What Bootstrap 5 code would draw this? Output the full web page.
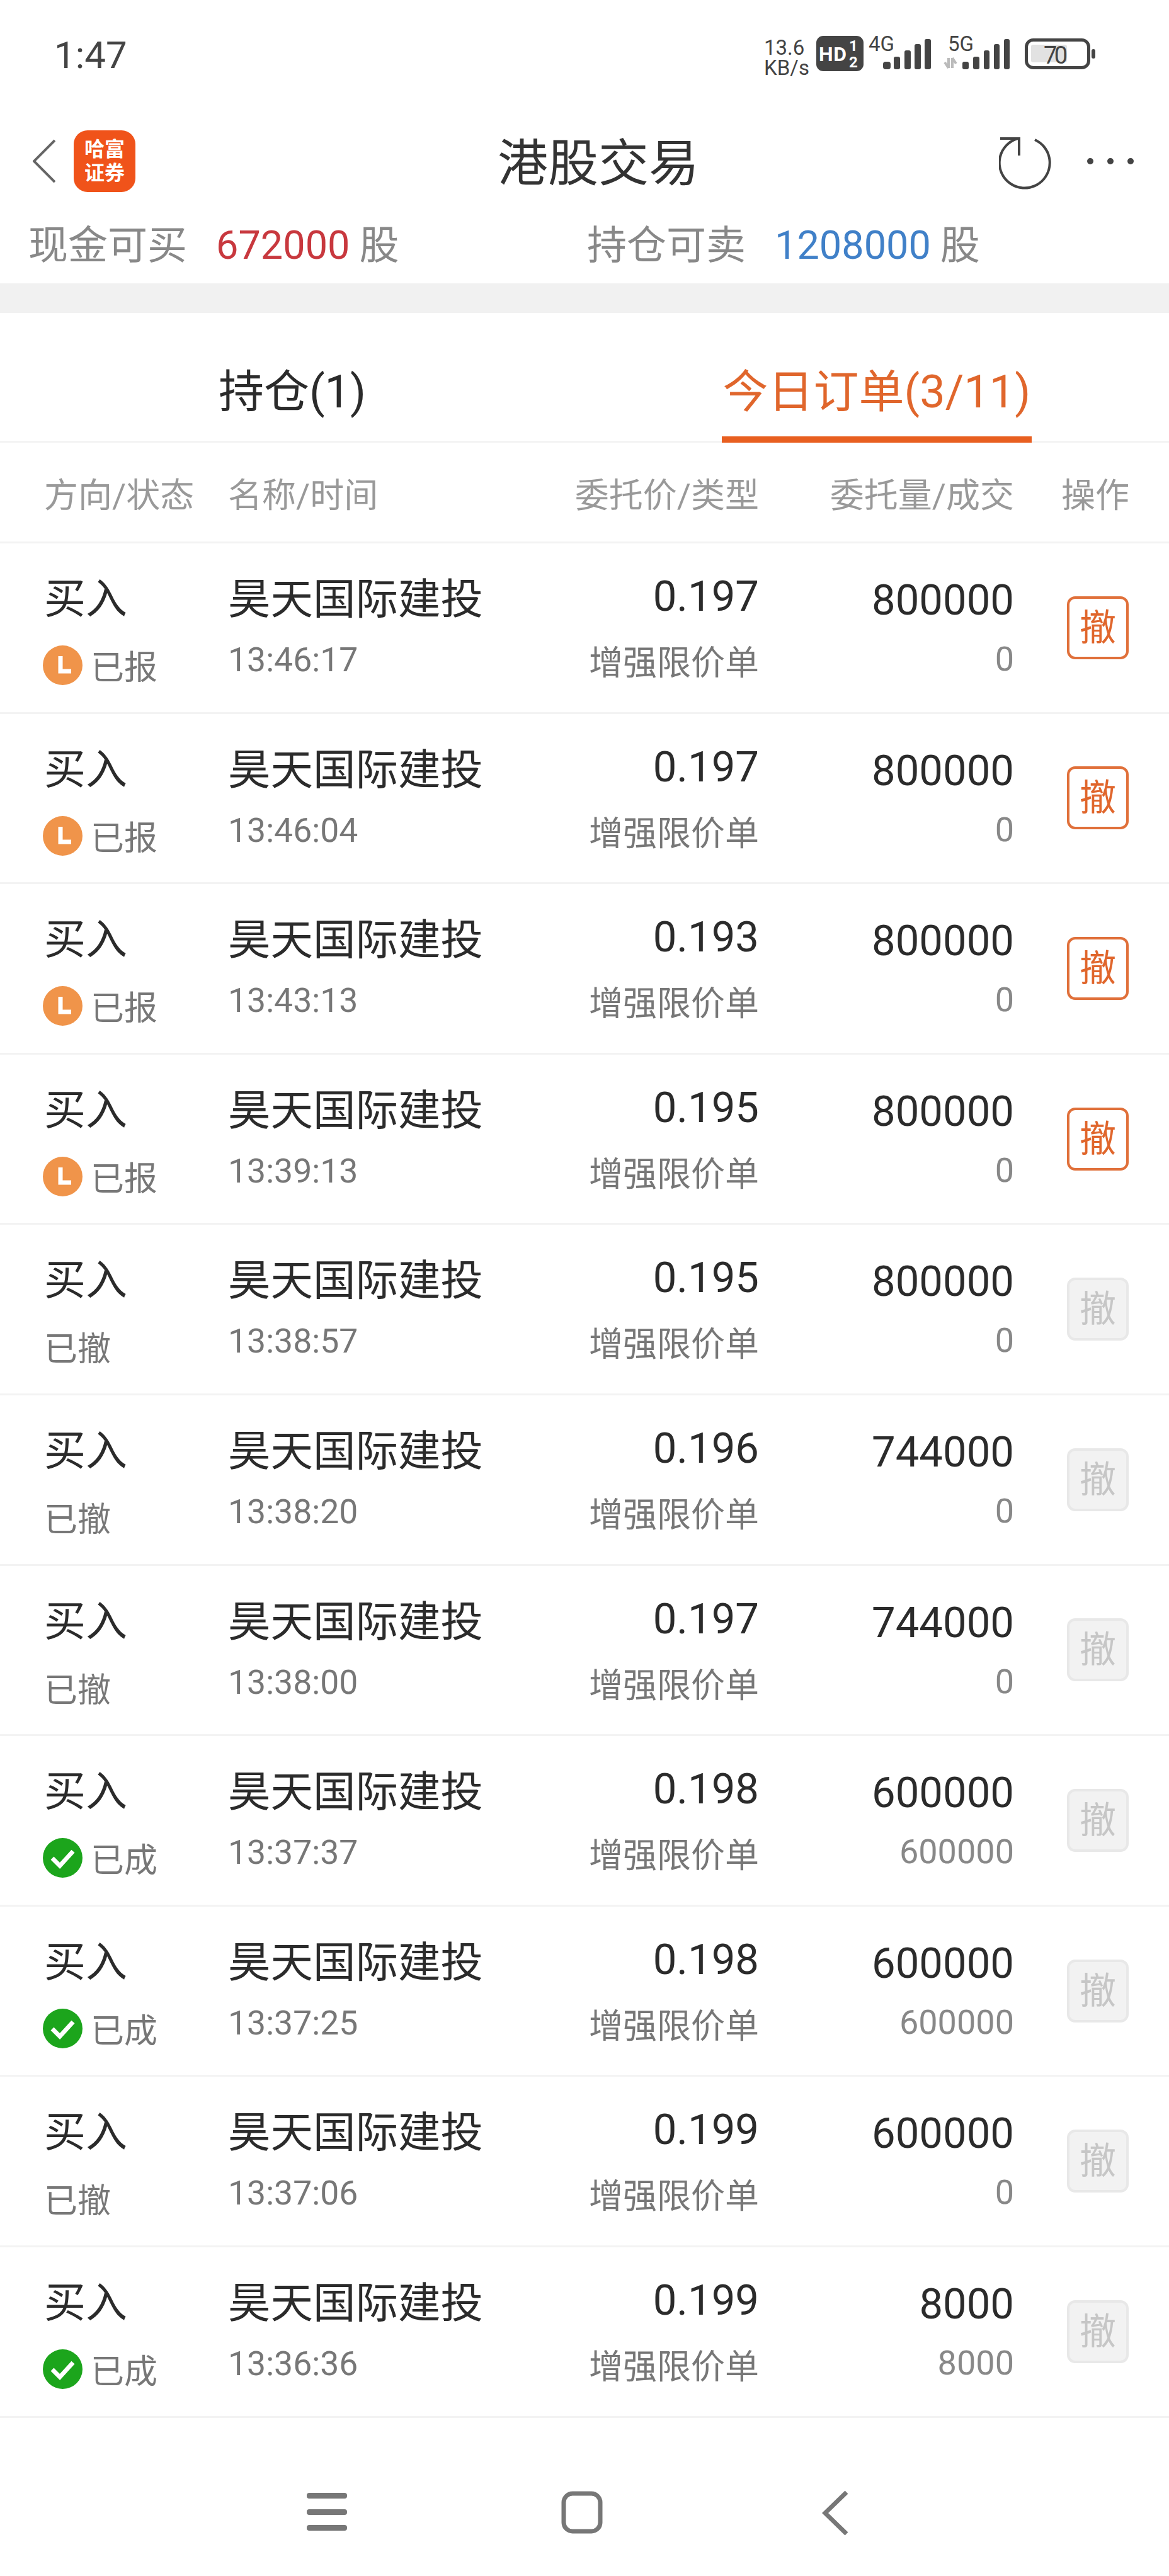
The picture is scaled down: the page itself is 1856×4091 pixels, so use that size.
<!DOCTYPE html>
<html lang="zh-CN">
<head>
  <meta charset="UTF-8">
  <meta name="viewport" content="width=device-width, initial-scale=1.0">
  <link href="https://cdn.jsdelivr.net/npm/bootstrap@5.3.0/dist/css/bootstrap.min.css" rel="stylesheet">
  <title>港股交易</title>
  <style>
    body { font-family: Roboto, "Noto Sans CJK SC", sans-serif; background: #fff; color: #222; }
    svg { display: block; }
    svg text { font-family: Roboto, sans-serif; }

    /* status bar */
    .status-bar { height: 176px; padding: 57px 117px 0 86px; color: #444; }
    .status-time { font-size: 60px; line-height: 62px; }
    .status-speed { font-size: 33px; line-height: 32px; margin-right: 14px; width: 69px; margin-top: 3px; white-space: nowrap; }
    .status-net { margin-top: -6px; }
    .status-batt { margin-left: 23px; }

    /* title bar */
    .title-bar { height: 168px; padding: 0 56px 8px 52px; }
    .title-left { width: 738px; }
    .app-logo { width: 98px; height: 98px; margin-left: 29px; background: #f0531a; border-radius: 22px; color: #fff; font-size: 32px; font-weight: 700; line-height: 38px; text-align: center; padding-top: 11px; }
    .title-text { font-size: 80px; line-height: 90px; color: #333; margin-top: 8px; }
    .refresh-icon { margin: 6px 0 0 3px; }
    .dots-icon { margin-left: 54px; }

    /* available quantities */
    .stats-row { height: 106px; padding: 8px 0 0 45px; font-size: 63px; line-height: 76px; color: #888; }
    .stat-block { width: 887px; }
    .stat-value { margin-left: 46px; margin-right: 15px; }
    .stat-buy { color: #c8383e; }
    .stat-sell { color: #4080c8; }
    .gray-band { height: 47px; background: #f1f1f1; }

    /* tabs */
    .tab-bar { height: 206px; border-bottom: 3px solid #f3f3f3; }
    .tab-cell { width: 928px; }
    .tab-label { display: inline-block; height: 206px; padding: 81px 2px 0; font-size: 72px; line-height: 90px; color: #2b2b2b; }
    .tab-on { color: #e0662c; border-bottom: 10px solid #e85f20; }

    /* order table */
    .head-row { height: 160px; padding: 11px 0 0 70px; font-size: 54px; color: #999; border-bottom: 3px solid #f3f3f3; }
    .head-action { margin-left: 75px; }
    .order-row { height: 270.6px; padding-left: 70px; border-bottom: 3px solid #f3f3f3; }
    .cell-side { width: 292px; }
    .cell-name { width: 441px; }
    .cell-price { width: 402px; }
    .cell-qty { width: 405px; }
    .side-text { padding-top: 49px; font-size: 66px; line-height: 80px; color: #2b2b2b; }
    .state-line { margin-top: 33px; height: 63px; margin-left: -2px; font-size: 53px; line-height: 63px; color: #777; }
    .state-line span { margin-left: 13px; position: relative; top: 5px; }
    .state-line.plain span { margin-left: 2px; }
    .name-text { padding-top: 49px; font-size: 67.5px; line-height: 80px; color: #2b2b2b; white-space: nowrap; }
    .time-text { margin-top: 26px; font-size: 53.5px; line-height: 60px; color: #777; }
    .price-text { padding-top: 44px; font-size: 67px; line-height: 80px; color: #2b2b2b; }
    .type-text { margin-top: 37px; font-size: 54px; line-height: 60px; color: #777; }
    .qty-text { padding-top: 50px; font-size: 67px; line-height: 80px; color: #2b2b2b; }
    .fill-text { margin-top: 24px; font-size: 54px; line-height: 60px; color: #888; }
    .cancel-btn { width: 98px; height: 100px; margin-left: 84px; padding: 0; font-size: 58px; line-height: 88px; border: 4px solid #e0703a; border-radius: 13px; color: #e0662c; background: #fff; }
    .cancel-btn:disabled { border-color: #e8e8e8; background: #f2f2f2; color: #c6c6c6; opacity: 1; }

    /* system nav */
    .nav-strip { height: 250px; padding: 116px 0 0 487px; }
    .nav-home { margin-left: 340px; }
    .nav-back { margin-left: 348px; }
  </style>
</head>
<body>

<div class="status-bar d-flex">
  <div class="status-time">1:47</div>
  <div class="ms-auto d-flex">
    <div class="status-speed">13.6<br>KB/s</div>
    <svg width="75" height="56" viewBox="0 0 75 56">
      <rect width="75" height="56" rx="11" fill="#444"/>
      <text x="4" y="40" font-size="32" font-weight="700" fill="#fff" textLength="44">HD</text>
      <text x="52" y="24" font-size="24" font-weight="700" fill="#fff">1</text>
      <text x="52" y="50" font-size="24" font-weight="700" fill="#fff">2</text>
    </svg>
    <svg class="ms-2 status-net" width="100" height="60" viewBox="0 -6 100 60">
      <text x="0" y="24" font-size="33" fill="#444">4G</text>
      <g fill="#444">
        <rect x="23" y="41" width="12" height="12" rx="4"/>
        <rect x="40" y="33" width="10" height="20" rx="3"/>
        <rect x="57" y="23" width="10" height="30" rx="3"/>
        <rect x="73" y="13" width="10" height="40" rx="3"/>
        <rect x="89" y="5" width="10" height="48" rx="3"/>
      </g>
    </svg>
    <svg class="status-net" style="margin-left:19px" width="106" height="60" viewBox="0 -6 106 60">
      <text x="7" y="24" font-size="33" fill="#444">5G</text>
      <path d="M8 35v16M2 42l6 9M14 35v16M14 35l6 9" stroke="#bbb" stroke-width="4" fill="none"/>
      <g fill="#444">
        <rect x="30" y="41" width="10" height="12" rx="3"/>
        <rect x="47" y="33" width="10" height="20" rx="3"/>
        <rect x="64" y="23" width="9" height="30" rx="3"/>
        <rect x="80" y="13" width="9" height="40" rx="3"/>
        <rect x="96" y="5" width="9" height="48" rx="3"/>
      </g>
    </svg>
    <svg class="status-batt" width="112" height="54" viewBox="0 0 112 54">
      <rect x="2.5" y="6.5" width="99" height="44" rx="11" fill="#fff" stroke="#444" stroke-width="5"/>
      <rect x="10" y="14" width="57" height="28" rx="3" fill="#e2e2e2"/>
      <text x="30" y="44" font-size="38" fill="#444" textLength="38">70</text>
      <rect x="106" y="21" width="6" height="15" rx="3" fill="#444"/>
    </svg>
  </div>
</div>

<div class="title-bar d-flex align-items-center">
  <div class="title-left d-flex align-items-center">
    <svg width="36" height="70" viewBox="0 0 36 70">
      <path d="M35 2 2 35l33 33" fill="none" stroke="#666" stroke-width="4"/>
    </svg>
    <div class="app-logo">哈富<br>证券</div>
  </div>
  <div class="title-text">港股交易</div>
  <div class="ms-auto d-flex align-items-center">
    <svg class="refresh-icon" width="86" height="84" viewBox="0 0 86 84">
      <path d="M57 5A40 40 0 1 1 30 3M2 3H32V30" fill="none" stroke="#444" stroke-width="4"/>
    </svg>
    <svg class="dots-icon" width="74" height="12" viewBox="0 0 74 12">
      <circle cx="5" cy="6" r="5" fill="#444"/><circle cx="37" cy="6" r="5" fill="#444"/><circle cx="69" cy="6" r="5" fill="#444"/>
    </svg>
  </div>
</div>

<div class="stats-row d-flex">
  <div class="stat-block">现金可买<span class="stat-value stat-buy">672000</span>股</div>
  <div class="stat-block">持仓可卖<span class="stat-value stat-sell">1208000</span>股</div>
</div>
<div class="gray-band"></div>

<div class="tab-bar d-flex">
  <div class="tab-cell text-center"><span class="tab-label">持仓(1)</span></div>
  <div class="tab-cell text-center"><span class="tab-label tab-on">今日订单(3/11)</span></div>
</div>

<div class="head-row d-flex align-items-center">
  <div class="cell-side">方向/状态</div>
  <div class="cell-name">名称/时间</div>
  <div class="cell-price text-end">委托价/类型</div>
  <div class="cell-qty text-end">委托量/成交</div>
  <div class="head-action">操作</div>
</div>

<div id="orders"></div>

<div class="nav-strip d-flex">
  <svg width="64" height="70" viewBox="0 0 64 70">
    <g fill="#777"><rect y="3" width="64" height="9" rx="4"/><rect y="29" width="64" height="9" rx="4"/><rect y="54" width="64" height="9" rx="4"/></g>
  </svg>
  <svg class="nav-home" width="66" height="70" viewBox="0 0 66 70">
    <rect x="4" y="4" width="58" height="60" rx="14" fill="none" stroke="#777" stroke-width="7"/>
  </svg>
  <svg class="nav-back" width="42" height="70" viewBox="0 0 42 70">
    <path d="M39 2 5 35l34 33" fill="none" stroke="#777" stroke-width="7"/>
  </svg>
</div>

<script>
  // 今日订单: price, quantity, filled, time, state
  const orders = [
    ['0.197', '800000', '0', '13:46:17', 'wait'],
    ['0.197', '800000', '0', '13:46:04', 'wait'],
    ['0.193', '800000', '0', '13:43:13', 'wait'],
    ['0.195', '800000', '0', '13:39:13', 'wait'],
    ['0.195', '800000', '0', '13:38:57', 'gone'],
    ['0.196', '744000', '0', '13:38:20', 'gone'],
    ['0.197', '744000', '0', '13:38:00', 'gone'],
    ['0.198', '600000', '600000', '13:37:37', 'done'],
    ['0.198', '600000', '600000', '13:37:25', 'done'],
    ['0.199', '600000', '0', '13:37:06', 'gone'],
    ['0.199', '8000', '8000', '13:36:36', 'done']
  ];

  const clockIcon = '<svg width="63" height="63" viewBox="0 0 63 63"><circle cx="31.5" cy="31.5" r="31.5" fill="#f0944a"/><path d="M28 17v24h17" fill="none" stroke="#fff" stroke-width="7"/></svg>';
  const checkIcon = '<svg width="63" height="63" viewBox="0 0 63 63"><circle cx="31.5" cy="31.5" r="31.5" fill="#1ca51c"/><path d="M15 32l12 12 21-23" fill="none" stroke="#fff" stroke-width="7"/></svg>';

  function stateLine(state) {
    if (state === 'wait') return `<div class="state-line d-flex">${clockIcon}<span>已报</span></div>`;
    if (state === 'done') return `<div class="state-line d-flex">${checkIcon}<span>已成</span></div>`;
    return '<div class="state-line plain d-flex"><span>已撤</span></div>';
  }

  document.getElementById('orders').innerHTML = orders.map(([price, qty, filled, time, state]) => `
    <div class="order-row d-flex align-items-start">
      <div class="cell-side"><div class="side-text">买入</div>${stateLine(state)}</div>
      <div class="cell-name"><div class="name-text">昊天国际建投</div><div class="time-text">${time}</div></div>
      <div class="cell-price text-end"><div class="price-text">${price}</div><div class="type-text">增强限价单</div></div>
      <div class="cell-qty text-end"><div class="qty-text">${qty}</div><div class="fill-text">${filled}</div></div>
      <button class="btn cancel-btn align-self-center" ${state === 'wait' ? '' : 'disabled'}>撤</button>
    </div>`).join('');
</script>
<script src="https://cdn.jsdelivr.net/npm/bootstrap@5.3.0/dist/js/bootstrap.bundle.min.js"></script>

</body>
</html>
